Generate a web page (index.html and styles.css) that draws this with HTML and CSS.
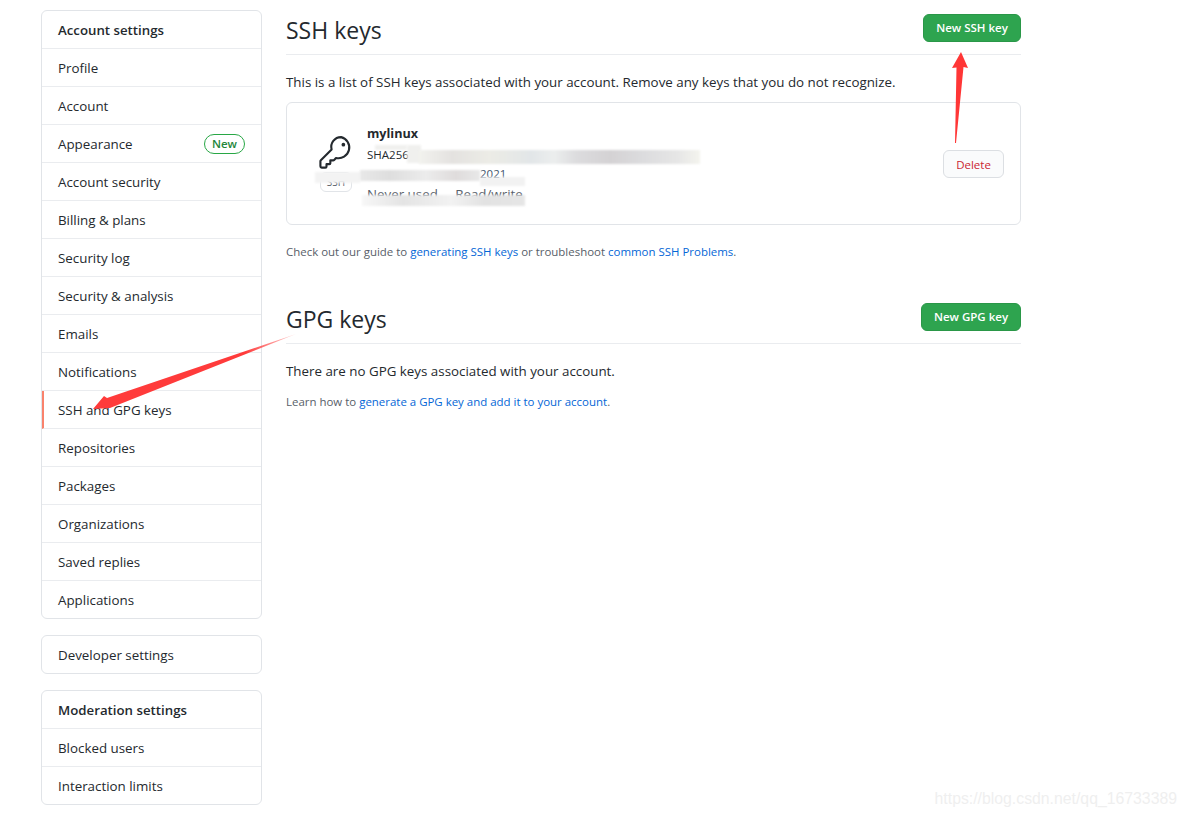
FILE: index.html
```html
<!DOCTYPE html>
<html lang="en">
<head>
    <meta charset="UTF-8">
    <meta name="viewport" content="width=device-width, initial-scale=1.0">
    <title>SSH and GPG keys</title>
    <link rel="stylesheet" href="styles.css">
</head>
<body>
    <div class="page">
        <div class="sidebar">
            <nav class="menu">
                <h3 class="menu-heading">Account settings</h3>
                <a class="menu-item">Profile</a>
                <a class="menu-item">Account</a>
                <a class="menu-item">Appearance <span class="new-label">New</span></a>
                <a class="menu-item">Account security</a>
                <a class="menu-item">Billing &amp; plans</a>
                <a class="menu-item">Security log</a>
                <a class="menu-item">Security &amp; analysis</a>
                <a class="menu-item">Emails</a>
                <a class="menu-item">Notifications</a>
                <a class="menu-item selected">SSH and GPG keys</a>
                <a class="menu-item">Repositories</a>
                <a class="menu-item">Packages</a>
                <a class="menu-item">Organizations</a>
                <a class="menu-item">Saved replies</a>
                <a class="menu-item">Applications</a>
            </nav>
            <nav class="menu">
                <a class="menu-item">Developer settings</a>
            </nav>
            <nav class="menu">
                <h3 class="menu-heading">Moderation settings</h3>
                <a class="menu-item">Blocked users</a>
                <a class="menu-item">Interaction limits</a>
            </nav>
        </div>

        <main class="content">
            <div class="section-head">
                <h2>SSH keys</h2>
                <button class="btn-green btn-ssh">New SSH key</button>
            </div>
            <p class="intro">This is a list of SSH keys associated with your account. Remove any keys that you do not recognize.</p>

            <div class="key-box">
                <div class="key-icon">
                    <!-- key, octicon style -->
                    <svg width="34" height="34" viewBox="0 0 24 24" fill="none" stroke="#24292e" stroke-width="1.5" stroke-linejoin="round" stroke-linecap="round">
                        <path d="M15.6 1.5a6.9 6.9 0 0 0-6.7 8.7L1.3 17.8a1 1 0 0 0-.3.7v3.6c0 .5.4.9.9.9h2.6c.4 0 .8-.4.8-.8v-1.6h2c.4 0 .7-.3.7-.7v-2h2c.3 0 .5-.1.7-.3l1.300-1.400a6.900 6.900 0 1 0 3.600-14.700z"/>
                        <circle cx="17.200" cy="6.800" r="1.300" fill="#24292e" stroke="none"/>
                    </svg>
                    <span class="ssh-label">SSH</span>
                </div>
                <div class="key-info">
                    <strong>mylinux</strong>
                    <div class="fingerprint">SHA256:</div>
                    <div class="added">2021</div>
                    <div class="usage">Never used &nbsp; &nbsp; Read/write</div>
                </div>
                <button class="btn-delete">Delete</button>

                <!-- smudges that hide the key details -->
                <div class="smudge smudge-a"></div>
                <div class="smudge smudge-a2"></div>
                <div class="smudge smudge-b"></div>
                <div class="smudge smudge-c"></div>
                <div class="smudge smudge-d"></div>
                <div class="smudge smudge-e"></div>
                <div class="smudge smudge-f"></div>
            </div>

            <p class="note">Check out our guide to <a>generating SSH keys</a> or troubleshoot <a>common SSH Problems</a>.</p>

            <div class="section-head gpg-head">
                <h2>GPG keys</h2>
                <button class="btn-green btn-gpg">New GPG key</button>
            </div>
            <p class="intro">There are no GPG keys associated with your account.</p>
            <p class="note gpg-note">Learn how to <a>generate a GPG key and add it to your account</a>.</p>
        </main>
    </div>

    <!-- red arrows drawn over the screenshot -->
    <svg class="arrows" width="1186" height="819" viewBox="0 0 1186 819">
        <defs>
            <linearGradient id="fade" x1="296" y1="334" x2="245" y2="352" gradientUnits="userSpaceOnUse">
                <stop offset="0" stop-color="#ff3b3b" stop-opacity="0.2"/>
                <stop offset="1" stop-color="#ff3b3b"/>
            </linearGradient>
        </defs>
        <path d="M961 52 L968 68 L963.500 67 L956 143 L955 143 L956.500 67.500 L952 68 Z" fill="#ff3636"/>
        <path d="M296 334 L107 398 L104 396 L93 409 L110 408 Z" fill="url(#fade)"/>
    </svg>

    <div class="watermark">https://blog.csdn.net/qq_16733389</div>
</body>
</html>
```
FILE: styles.css
```css
* {
    box-sizing: border-box;
}
body {
    margin: 0;
    background: #fff;
    color: #24292e;
    font-family: "Open Sans", "Noto Sans", Arial, sans-serif;
    font-size: 13.35px;
    position: relative;
    height: 819px;
    overflow: hidden;
}
.page {
    display: flex;
    align-items: flex-start;
    padding: 10px 0 0 41px;
}
.sidebar {
    width: 221px;
    margin-right: 24px;
    flex-shrink: 0;
}
.menu {
    border: 1px solid #e1e4e8;
    border-radius: 6px;
    margin-bottom: 16px;
    overflow: hidden;
}
.menu-heading {
    margin: 0;
    height: 38px;
    padding: 0 16px;
    display: flex;
    align-items: center;
    font-size: 13.25px;
    font-weight: 600;
    border-bottom: 1px solid #eaecef;
}
.menu-item {
    height: 38px;
    padding: 0 16px;
    display: flex;
    align-items: center;
    justify-content: space-between;
    border-bottom: 1px solid #eaecef;
    color: #24292e;
}
.menu-item:last-child {
    border-bottom: none;
    height: 37px;
}
.menu-item.selected {
    border-left: 2px solid #f9826c;
    padding-left: 14px;
}
.new-label {
    border: 1px solid #28a745;
    border-radius: 10px;
    color: #22863a;
    font-size: 11.5px;
    font-weight: 600;
    line-height: 18px;
    padding: 0 7px;
}
.content {
    width: 735px;
}
.section-head {
    display: flex;
    justify-content: space-between;
    align-items: center;
    height: 45px;
    border-bottom: 1px solid #eaecef;
}
.section-head h2 {
    margin: 0 0 4px;
    font-size: 23px;
    font-weight: 400;
    line-height: 40px;
}
.btn-green {
    height: 28px;
    background: #2ea44f;
    border: 1px solid #2a9748;
    border-radius: 6px;
    color: #fff;
    font-family: inherit;
    font-size: 11.5px;
    font-weight: 600;
    padding: 0;
}
.btn-ssh {
    width: 98px;
    margin-top: -9px;
}
.btn-gpg {
    width: 100px;
    margin-top: -9px;
}
.intro {
    margin: 17px 0 0;
    line-height: 20px;
}
.key-box {
    position: relative;
    display: flex;
    margin-top: 10px;
    height: 123px;
    border: 1px solid #e1e4e8;
    border-radius: 6px;
    padding: 21px 16px 0 32px;
}
.key-icon {
    width: 34px;
    margin-right: 14px;
    text-align: center;
    padding-top: 11px;
}
.key-icon svg {
    display: block;
}
.ssh-label {
    display: block;
    width: 32px;
    height: 20px;
    margin: 3px 0 0 1px;
    border: 1px solid #e1e4e8;
    border-radius: 6px;
    font-size: 10px;
    line-height: 18px;
    color: #586069;
}
.key-info {
    flex: 1;
    font-size: 11.5px;
    line-height: 19px;
}
.key-info strong {
    display: block;
    margin-top: 1px;
    font-size: 12.6px;
    font-weight: 700;
    line-height: 18px;
}
.fingerprint {
    margin-top: 2px;
}
.added {
    margin: 0 0 0 113px;
    height: 17px;
    overflow: hidden;
    color: #44566c;
}
.usage {
    margin-top: 4px;
    font-size: 13.35px;
    color: #586069;
}
.btn-delete {
    width: 61px;
    height: 28px;
    margin-top: 26px;
    background: #fafbfc;
    border: 1px solid #dcdfe3;
    border-radius: 6px;
    color: #cb2431;
    font-family: inherit;
    font-size: 11.5px;
    padding: 0;
}
.smudge {
    position: absolute;
    filter: blur(1px);
}
.smudge-a {
    left: 88px;
    top: 42px;
    width: 32px;
    height: 5px;
    background: #f0f0ee;
}
.smudge-a2 {
    left: 120px;
    top: 42px;
    width: 14px;
    height: 18px;
    background: #f0f0ee;
}
.smudge-b {
    left: 132px;
    top: 47px;
    width: 281px;
    height: 14px;
    background: linear-gradient(90deg, #f2f2ee, #e4e2e0 12%, #ecece6 25%, #e2e6e8 40%, #eceeee 48%, #dcdcde 56%, #d4d2d4 68%, #dcdcde 80%, #e6e6e6 92%, #f4f4ee);
}
.smudge-c {
    left: 28px;
    top: 69px;
    width: 45px;
    height: 11px;
    background: #f3f3f3;
}
.smudge-d {
    left: 73px;
    top: 67px;
    width: 120px;
    height: 11px;
    background: linear-gradient(90deg, #e8e8e8, #dedede 25%, #ececec 55%, #dfdcdc 80%, #e8e8e8);
}
.smudge-e {
    left: 193px;
    top: 74px;
    width: 45px;
    height: 9px;
    background: #f2f2f2;
}
.smudge-f {
    left: 75px;
    top: 92px;
    width: 163px;
    height: 11px;
    background: linear-gradient(90deg, #f7f7f7, #e4e4e4 25%, #f2f2f2 55%, #e2e2e2 75%, #e6e6e6);
}
.note {
    margin: 18px 0 0;
    font-size: 11.46px;
    line-height: 18px;
    color: #586069;
}
.note a {
    color: #0366d6;
}
.gpg-head {
    margin-top: 38px;
}
.gpg-note {
    margin-top: 12px;
}
.arrows {
    position: absolute;
    left: 0;
    top: 0;
    pointer-events: none;
}
.watermark {
    position: absolute;
    right: 9px;
    top: 790px;
    font-family: "Liberation Sans", Arial, sans-serif;
    font-size: 15.8px;
    color: #efefef;
}
```
